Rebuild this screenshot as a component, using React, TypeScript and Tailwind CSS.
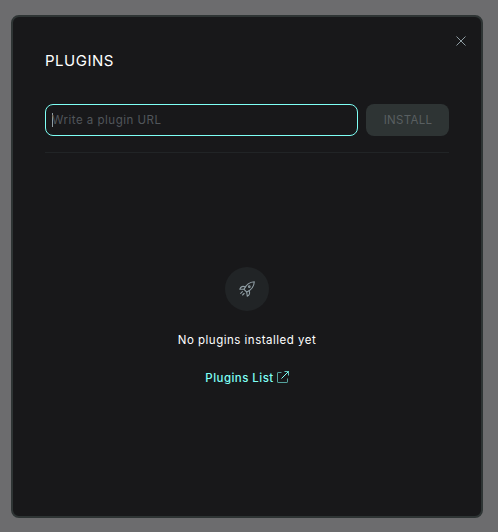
function CloseIcon() {
  return (
    <svg width="16" height="16" viewBox="0 0 16 16" fill="none" stroke="#8f9da3" strokeWidth="1">
      <path d="M3.5 3.5 12.5 12.5M12.5 3.5 3.5 12.5" />
    </svg>
  );
}

function RocketIcon() {
  return (
    <svg width="16" height="16" viewBox="0 0 16 16" fill="none" stroke="#8f9da3" strokeWidth="1.1" strokeLinejoin="round" strokeLinecap="round">
      <path d="M5 8.3C6.8 4.3 10.3 1 15.3.7C15 5.7 11.7 9.2 7.7 11Z" />
      <path d="M6.2 5.9C3.8 4.8 1.8 5.5.8 8.2L5 8.3M10.1 9.8C11.2 12.2 10.3 14.5 8.3 15.3L7.7 11" />
      <path d="M3.4 10.7 1.7 12.4M5.1 12.5 3.6 14" />
      <circle cx="10.3" cy="5.7" r=".8" />
    </svg>
  );
}

function OpenLinkIcon() {
  return (
    <svg width="12" height="12" viewBox="0 0 12 12" fill="none" stroke="#7efff5" strokeWidth="1">
      <path d="M4.5 1.5H1.1Q.5 1.5.5 2.1V10.9Q.5 11.5 1.1 11.5H9.9Q10.5 11.5 10.5 10.9V7.5" opacity=".6" />
      <path d="M7.5.5H11.5V4.5" opacity=".75" />
      <path d="M11.5.5 4.5 7.5" />
    </svg>
  );
}

export default function App() {
  return (
    <main className="h-[532px] w-[498px] bg-[#6c6c6e] pt-[15px] pl-[11px] font-['Inter','Liberation_Sans',sans-serif] text-[11.5px]">
      <section className="flex h-[503px] w-[472px] flex-col rounded-lg border-2 border-[#2e3434] bg-[#18181a] px-8 text-white">
        <div className="-mr-5 flex h-8 items-end justify-end">
          <button aria-label="Close"><CloseIcon /></button>
        </div>
        <h1 className="mt-0.5 h-5 text-[15px] leading-5 tracking-[0.5px]">PLUGINS</h1>
        <div className="mt-[33px] flex h-8 gap-2">
          <div className="flex w-[313px] items-center rounded-lg border border-[#7efff5] pl-1.5">
            <span className="h-3.5 w-px bg-[#8f9da3]" />
            <span className="-ml-px pt-px tracking-[0.5px] text-[#51565a]">Write a plugin URL</span>
          </div>
          <button className="w-[83px] rounded-lg bg-[#2e3434] pt-px pl-px tracking-[0.3px] text-[#595f61]" disabled>INSTALL</button>
        </div>
        <div className="mt-4 h-px w-[404px] bg-[#212426]" />
        <div className="mt-[114px] flex w-[404px] flex-col items-center">
          <div className="flex size-11 items-center justify-center rounded-full bg-[#212426]"><RocketIcon /></div>
          <p className="mt-[21px] leading-4 tracking-[0.5px]">No plugins installed yet</p>
          <a className="mt-[21px] flex h-4 items-center gap-[3px] font-medium text-[#7efff5]">
            <span className="pt-0.5 leading-4 tracking-[0.45px]">Plugins List</span><OpenLinkIcon />
          </a>
        </div>
      </section>
    </main>
  );
}
